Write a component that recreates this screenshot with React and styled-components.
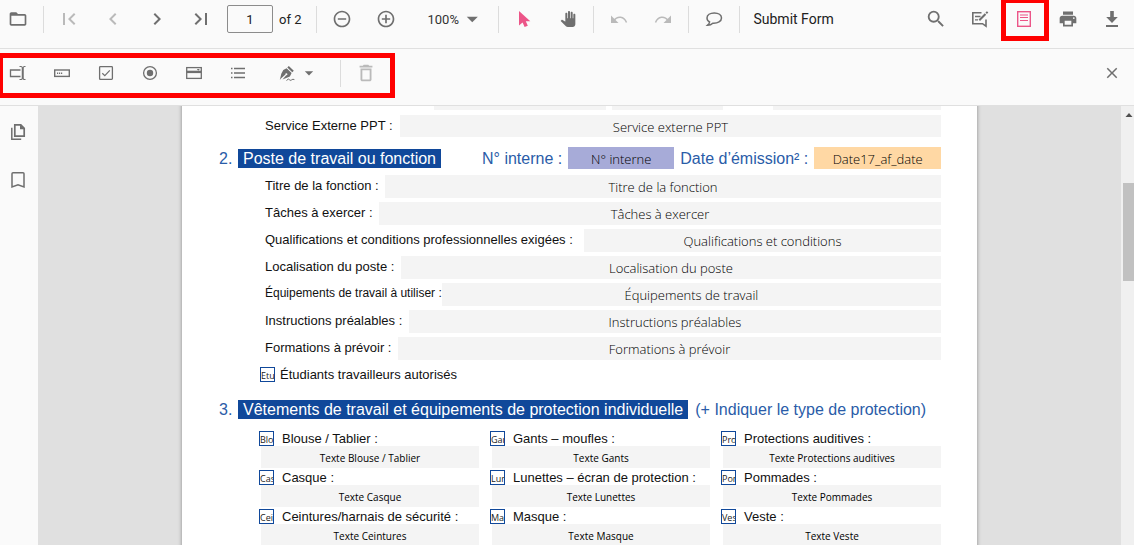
import React, { useState } from 'react';
import styled, { createGlobalStyle, css } from 'styled-components';
import {
  MdFolderOpen,
  MdFirstPage,
  MdChevronLeft,
  MdChevronRight,
  MdLastPage,
  MdRemoveCircleOutline,
  MdAddCircleOutline,
  MdArrowDropDown,
  MdPanTool,
  MdSearch,
  MdPrint,
  MdClose,
  MdDeleteOutline,
} from 'react-icons/md';

const GlobalStyle = createGlobalStyle`
  * {
    box-sizing: border-box;
  }

  body {
    margin: 0;
    font-family: Roboto, 'Liberation Sans', sans-serif;
    color: #212121;
  }

  button,
  input {
    font-family: inherit;
    margin: 0;
  }
`;

const Viewer = styled.div`
  display: flex;
  flex-direction: column;
  height: 100vh;
  overflow: hidden;
`;

const Toolbar = styled.div`
  display: flex;
  align-items: center;
  gap: 8px;
  flex: none;
  height: ${p => (p.$tall ? 57 : 49)}px;
  padding: ${p => (p.$tall ? '0 4px 8px 0' : '0 4px 10px 0')};
  background: #fafafa;
  border-bottom: 1px solid #e0e0e0;
`;

const RightGroup = styled.div`
  display: flex;
  gap: 8px;
  margin-left: auto;
`;

const Separator = styled.span`
  width: 1px;
  height: 27px;
  margin: 0 -1px;
  background: #dcdcdc;
`;

const IconButton = styled.button`
  position: relative;
  display: flex;
  align-items: center;
  justify-content: center;
  gap: 3px;
  flex: none;
  width: ${p => (p.$wide ? 69 : 36)}px;
  height: 36px;
  padding: 0;
  border: 0;
  background: none;
  color: ${p => (p.$active ? '#ec5588' : '#6f6f6f')};

  &:disabled {
    color: #bababa;
  }
`;

const TextButton = styled.button`
  padding: 0 6px;
  border: 0;
  background: none;
  color: #212121;
  font-size: 14px;
  white-space: nowrap;
`;

const ZoomButton = styled.button`
  display: flex;
  align-items: center;
  justify-content: space-between;
  width: 79px;
  padding: 0 6px 0 15px;
  border: 0;
  background: none;
  color: #333;
  font-size: 13px;

  svg {
    color: #6f6f6f;
  }
`;

const PageBox = styled.label`
  display: flex;
  align-items: center;
  gap: 6px;
  padding-right: 8px;
  font-size: 13px;
  white-space: nowrap;
`;

const PageInput = styled.input`
  width: 46px;
  height: 28px;
  padding: 0;
  border: 1px solid #8c8c8c;
  border-radius: 2px;
  background: #fafafa;
  color: #212121;
  font-size: 13px;
  text-align: center;
`;

// red frames drawn over the tools to point at them
const frame = css`
  content: '';
  position: absolute;
  border: 5px solid #f00;
  pointer-events: none;
`;

const FramedButton = styled(IconButton)`
  &::after {
    ${frame}
    inset: -3px -7px -4px -5px;
  }
`;

const FormTools = styled.div`
  position: relative;
  display: flex;
  align-items: center;
  gap: 8px;

  &::after {
    ${frame}
    inset: -2px -11px -7px -2px;
  }
`;

const Body = styled.div`
  display: flex;
  flex: 1;
  min-height: 0;
`;

const SideBar = styled.nav`
  display: flex;
  flex-direction: column;
  gap: 12px;
  flex: none;
  width: 38px;
  padding-top: 8px;
  background: #fafafa;
`;

const Canvas = styled.main`
  flex: 1;
  min-width: 0;
  overflow: hidden;
  background: #e0e0e0;
`;

const Sheet = styled.form`
  width: 795px;
  max-width: 100%;
  min-height: 100%;
  margin: 0 auto;
  padding: 0 36px 40px 83px;
  background: #fff;
  box-shadow: 0 0 4px rgba(0, 0, 0, 0.4);
  font-family: 'Liberation Sans', Arial, sans-serif;
  font-size: 13px;
  color: #111;
`;

const ScrollBar = styled.div`
  display: flex;
  flex-direction: column;
  align-items: flex-end;
  flex: none;
  width: 13px;
  background: #f0f0f0;
`;

const ScrollArrow = styled.svg`
  display: block;
  width: 10px;
  height: 17px;
  margin-bottom: 60px;
`;

const ScrollThumb = styled.div`
  width: 11px;
  height: 98px;
  background: #c1c1c1;
`;

const FieldGroup = styled.div`
  display: flex;
  justify-content: flex-end;
  gap: ${p => p.$gap}px;
`;

// only the bottom edge of this row is scrolled into view
const CutRow = styled(FieldGroup)`
  margin: -18px 0 5px;
`;

const Field = styled.input`
  flex: ${p => (p.$width ? 'none' : 1)};
  width: ${p => (p.$width ? `${p.$width}px` : '100%')};
  min-width: 0;
  height: ${p => p.$height || 23}px;
  padding: 1px 0 0;
  border: 0;
  background: ${p => p.$color || '#f4f4f4'};
  color: #000;
  font-family: 'Open Sans', 'Noto Sans', sans-serif;
  font-size: ${p => (p.$small ? 10 : 13)}px;
  font-weight: ${p => (p.$small ? 400 : 300)};
  text-align: center;
`;

const Line = styled.div`
  display: flex;
  margin-bottom: 4px;
`;

const LineLabel = styled.label`
  min-width: ${p => p.$width}px;
  font-size: ${p => (p.$small ? 12 : 13)}px;
  line-height: 21px;
  white-space: nowrap;
`;

const Heading = styled.div`
  display: flex;
  align-items: center;
  margin: ${p => p.$margin};
  color: #2a5ca8;
  font-size: 16px;
  line-height: 19px;
  white-space: nowrap;
`;

const HeadingNumber = styled.span`
  width: 19px;
`;

const HeadingTitle = styled.h2`
  margin: 0 ${p => p.$after}px 0 0;
  padding: 0 5px;
  background: #10489a;
  color: #fff;
  font-size: 16px;
  font-weight: 400;
  line-height: 19px;
`;

const HeadingLabel = styled.label`
  padding: 0 6px;
`;

const Tick = styled.span`
  display: grid;
  flex: none;
  width: 15px;
  height: 15px;
  border: 1px solid #10489a;
  background: #fff;
  overflow: hidden;

  > * {
    grid-area: 1 / 1;
  }
`;

const TickInput = styled.input`
  appearance: none;
  width: 13px;
  height: 13px;
`;

const TickName = styled.span`
  width: 13px;
  overflow: hidden;
  color: #222;
  font-family: 'Open Sans', 'Noto Sans', sans-serif;
  font-size: 9px;
  line-height: 15px;
  white-space: nowrap;
  pointer-events: none;
`;

const TickLabel = styled.label`
  display: flex;
  align-items: center;
  gap: 8px;
  height: 16px;
  white-space: nowrap;
`;

const TickLine = styled.div`
  margin: 6px 0 0 -5px;

  ${TickLabel} {
    gap: 5px;
  }
`;

const GearGrid = styled.div`
  display: grid;
  grid-template-columns: repeat(3, minmax(0, 1fr));
  gap: 1px 11px;
  margin-left: -6px;
`;

const GearField = styled.div`
  display: flex;
  padding-left: 2px;
`;

const Glyph = ({ children, size = 18 }) => (
  <svg
    width={size}
    height={size}
    viewBox="0 0 18 18"
    fill="none"
    stroke="currentColor"
    strokeWidth="1.5"
    aria-hidden="true"
  >
    {children}
  </svg>
);

const CursorIcon = () => (
  <Glyph>
    <path d="M4 1v14.500l3.600-3 2 4.600 3.200-1.300-2-4.500h4.500z" fill="currentColor" stroke="none" />
  </Glyph>
);

const UndoIcon = ({ flip }) => (
  <Glyph>
    <g transform={flip ? 'matrix(-1 0 0 1 18 0)' : undefined}>
      <path d="M3.500 11C7.500 5.500 14 6 16.500 12.500" />
      <path d="M1 5.500v7.500h7.500z" fill="currentColor" stroke="none" />
    </g>
  </Glyph>
);

const CommentIcon = () => (
  <Glyph>
    <path d="M9.300 3C5 3 2 5 2 8c0 1.800 1 3.200 2.600 4-.2 1.200-.8 2.200-2 3.200 2.200 0 4-.8 5.200-2 5 .3 8.700-1.900 8.700-5.200 0-3-3-5-7.200-5z" />
  </Glyph>
);

const AnnotateIcon = () => (
  <Glyph>
    <path d="M10.500 2.700H1.800v11h9.700l3.500 2.500V9.500" strokeWidth="1.600" />
    <path d="M4 6.500h5.500M4 9.800h3" strokeWidth="1.300" />
    <path d="M8.300 10.300l6.200-6.300" strokeWidth="2" />
    <path d="M15.200 3.300l1.400-1.400" strokeWidth="2" />
  </Glyph>
);

const FormIcon = () => (
  <Glyph>
    <rect x="2.700" y="1.700" width="12.600" height="14.600" strokeWidth="1.400" />
    <path d="M5 5h8M5 7.500h8M5 10.500h8" strokeWidth="1.100" />
  </Glyph>
);

const DownloadIcon = () => (
  <Glyph>
    <path d="M7.200 1h3.600v6h4L9 13 3.200 7h4zM3 15h12v2H3z" fill="currentColor" stroke="none" />
  </Glyph>
);

const TextboxIcon = () => (
  <Glyph>
    <path d="M11.500 6H1.500v6.500h10" strokeWidth="1.300" />
    <path
      d="M10.500 2.500h1.500q1.300 0 1.300 1.300v10.400q0 1.300-1.300 1.300h-1.500M16.500 2.500h-1q-1.300 0-1.300 1.300v10.400q0 1.300 1.300 1.300h1"
      strokeWidth="1.100"
    />
  </Glyph>
);

const PasswordIcon = () => (
  <Glyph>
    <rect x="1.700" y="6" width="14.600" height="6.400" strokeWidth="1.400" />
    <path d="M4 9.200h1.200M6 9.200h1.200M8 9.200h1.200" strokeWidth="1.600" />
  </Glyph>
);

const CheckboxIcon = () => (
  <Glyph>
    <rect x="2.600" y="2.600" width="12.800" height="12.800" rx=".8" strokeWidth="1.300" />
    <path d="M5.300 9.300l2.500 2.400 5-5.400" strokeWidth="1.200" />
  </Glyph>
);

const RadioIcon = () => (
  <Glyph>
    <circle cx="9" cy="9" r="6.400" strokeWidth="1.300" />
    <circle cx="9" cy="9" r="3.200" fill="currentColor" stroke="none" />
  </Glyph>
);

const DropdownIcon = () => (
  <Glyph>
    <rect x="1.700" y="3.600" width="14.600" height="10.800" strokeWidth="1.300" />
    <path d="M1.700 7.900h14.600" strokeWidth="2.400" />
    <path d="M11.800 5h3l-1.500 1.800z" fill="currentColor" stroke="none" />
  </Glyph>
);

const ListIcon = () => (
  <Glyph>
    <path d="M5 4.500h11M5 9h11M5 13.500h11" strokeWidth="1.400" />
    <path d="M2 4.500h1.500M2 9h1.500M2 13.500h1.500" strokeWidth="1.400" />
  </Glyph>
);

const SignatureIcon = () => (
  <Glyph>
    <path
      d="M10.800 2l5 4.800-1.500 1.500-5-4.700zM8.600 4.200l5 4.700-1.700 3.600-7.400 2.900 3.700-4.200a1 1 0 1 0-.8-.8L3 14.600 1.800 16l1.500-6.300 2-3.700z"
      fill="currentColor"
      stroke="none"
    />
    <path d="M8.500 16.500q2.200-2.500 2.900-.8.500 1.200 2 .3 1.500-1.300 3-.4" strokeWidth="1" />
  </Glyph>
);

const PagesIcon = () => (
  <Glyph>
    <path d="M5.800 1.800h6l3.400 3.500v7.900H5.800z" strokeWidth="1.700" />
    <path d="M11 1.500v4.700h4.700z" fill="currentColor" stroke="none" />
    <path d="M2.800 4.800v11.400h9.400" strokeWidth="1.500" />
  </Glyph>
);

const BookmarkIcon = () => (
  <Glyph>
    <path d="M4 1.800h10q1 0 1 1v13.200L9 13.700 3 16V2.800q0-1 1-1z" />
  </Glyph>
);

const lines = [
  { id: 'titre', label: 'Titre de la fonction :', value: 'Titre de la fonction', width: 120 },
  { id: 'taches', label: 'Tâches à exercer :', value: 'Tâches à exercer', width: 114 },
  {
    id: 'qualif',
    label: 'Qualifications et conditions professionnelles exigées :',
    value: 'Qualifications et conditions',
    width: 319,
  },
  { id: 'local', label: 'Localisation du poste :', value: 'Localisation du poste', width: 136 },
  { id: 'equip', label: 'Équipements de travail à utiliser :', value: 'Équipements de travail', width: 172, small: true },
  { id: 'instr', label: 'Instructions préalables :', value: 'Instructions préalables', width: 144 },
  { id: 'form', label: 'Formations à prévoir :', value: 'Formations à prévoir', width: 133 },
];

const gear = [
  { name: 'Blouse', label: 'Blouse / Tablier :', value: 'Texte Blouse / Tablier' },
  { name: 'Gants', label: 'Gants – moufles :', value: 'Texte Gants' },
  { name: 'Protections', label: 'Protections auditives :', value: 'Texte Protections auditives' },
  { name: 'Casque', label: 'Casque :', value: 'Texte Casque' },
  { name: 'Lunettes', label: 'Lunettes – écran de protection :', value: 'Texte Lunettes' },
  { name: 'Pommades', label: 'Pommades :', value: 'Texte Pommades' },
  { name: 'Ceintures', label: 'Ceintures/harnais de sécurité :', value: 'Texte Ceintures' },
  { name: 'Masque', label: 'Masque :', value: 'Texte Masque' },
  { name: 'Veste', label: 'Veste :', value: 'Texte Veste' },
];

const CheckField = ({ name, label }) => (
  <TickLabel>
    <Tick>
      <TickInput type="checkbox" name={name} />
      <TickName aria-hidden="true">{name.slice(0, 3)}</TickName>
    </Tick>
    {label}
  </TickLabel>
);

const MainToolbar = () => {
  const [page, setPage] = useState('1');

  return (
    <Toolbar>
      <IconButton aria-label="Open"><MdFolderOpen size={20} /></IconButton>
      <Separator />
      <IconButton aria-label="First page" disabled><MdFirstPage size={24} /></IconButton>
      <IconButton aria-label="Previous page" disabled><MdChevronLeft size={24} /></IconButton>
      <IconButton aria-label="Next page"><MdChevronRight size={24} /></IconButton>
      <IconButton aria-label="Last page"><MdLastPage size={24} /></IconButton>
      <PageBox>
        <PageInput aria-label="Page" value={page} onChange={e => setPage(e.target.value)} />
        of 2
      </PageBox>
      <Separator />
      <IconButton aria-label="Zoom out"><MdRemoveCircleOutline size={20} /></IconButton>
      <IconButton aria-label="Zoom in"><MdAddCircleOutline size={20} /></IconButton>
      <ZoomButton>
        100%
        <MdArrowDropDown size={28} />
      </ZoomButton>
      <Separator />
      <IconButton aria-label="Select" $active><CursorIcon /></IconButton>
      <IconButton aria-label="Pan"><MdPanTool size={16} /></IconButton>
      <Separator />
      <IconButton aria-label="Undo" disabled><UndoIcon /></IconButton>
      <IconButton aria-label="Redo" disabled><UndoIcon flip /></IconButton>
      <Separator />
      <IconButton aria-label="Comment"><CommentIcon /></IconButton>
      <Separator />
      <TextButton>Submit Form</TextButton>
      <RightGroup>
        <IconButton aria-label="Search"><MdSearch size={22} /></IconButton>
        <IconButton aria-label="Annotate"><AnnotateIcon /></IconButton>
        <FramedButton aria-label="Form designer" $active><FormIcon /></FramedButton>
        <IconButton aria-label="Print"><MdPrint size={20} /></IconButton>
        <IconButton aria-label="Download"><DownloadIcon /></IconButton>
      </RightGroup>
    </Toolbar>
  );
};

const DesignerToolbar = () => (
  <Toolbar $tall>
    <FormTools>
      <IconButton aria-label="Textbox"><TextboxIcon /></IconButton>
      <IconButton aria-label="Password"><PasswordIcon /></IconButton>
      <IconButton aria-label="Checkbox"><CheckboxIcon /></IconButton>
      <IconButton aria-label="Radio button"><RadioIcon /></IconButton>
      <IconButton aria-label="Dropdown"><DropdownIcon /></IconButton>
      <IconButton aria-label="List box"><ListIcon /></IconButton>
      <IconButton aria-label="Signature" $wide>
        <SignatureIcon />
        <MdArrowDropDown size={20} />
      </IconButton>
      <Separator />
      <IconButton aria-label="Delete" disabled><MdDeleteOutline size={22} /></IconButton>
    </FormTools>
    <RightGroup>
      <IconButton aria-label="Close"><MdClose size={18} /></IconButton>
    </RightGroup>
  </Toolbar>
);

const App = () => (
  <>
    <GlobalStyle />
    <Viewer>
      <MainToolbar />
      <DesignerToolbar />
      <Body>
        <SideBar>
          <IconButton aria-label="Thumbnails"><PagesIcon /></IconButton>
          <IconButton aria-label="Bookmarks"><BookmarkIcon /></IconButton>
        </SideBar>
        <Canvas>
          <Sheet>
            <CutRow $gap={50}>
              <FieldGroup $gap={6}>
                <Field aria-label="Rue" $width={172} $height={22} />
                <Field aria-label="Code postal" $width={111} $height={22} />
              </FieldGroup>
              <Field aria-label="Commune" $width={168} $height={22} />
            </CutRow>
            <Line>
              <LineLabel htmlFor="service" $width={135}>Service Externe PPT :</LineLabel>
              <Field id="service" defaultValue="Service externe PPT" $height={22} />
            </Line>
            <Heading $margin="10px 0 6px -46px">
              <HeadingNumber>2.</HeadingNumber>
              <HeadingTitle $after={35}>Poste de travail ou fonction</HeadingTitle>
              <HeadingLabel htmlFor="interne">N° interne :</HeadingLabel>
              <Field id="interne" defaultValue="N° interne" $width={106} $height={22} $color="#a7abd8" />
              <HeadingLabel htmlFor="date">Date d’émission² :</HeadingLabel>
              <Field id="date" defaultValue="Date17_af_date" $height={22} $color="#ffd8a4" />
            </Heading>
            {lines.map(l => (
              <Line key={l.id}>
                <LineLabel htmlFor={l.id} $width={l.width} $small={l.small}>{l.label}</LineLabel>
                <Field id={l.id} defaultValue={l.value} />
              </Line>
            ))}
            <TickLine>
              <CheckField name="Etudiants" label="Étudiants travailleurs autorisés" />
            </TickLine>
            <Heading $margin="18px 0 11px -46px">
              <HeadingNumber>3.</HeadingNumber>
              <HeadingTitle $after={7}>
                Vêtements de travail et équipements de protection individuelle
              </HeadingTitle>
              (+ Indiquer le type de protection)
            </Heading>
            <GearGrid>
              {gear.map(g => (
                <div key={g.name}>
                  <CheckField name={g.name} label={g.label} />
                  <GearField>
                    <Field aria-label={g.value} defaultValue={g.value} $height={22} $small />
                  </GearField>
                </div>
              ))}
            </GearGrid>
          </Sheet>
        </Canvas>
        <ScrollBar>
          <ScrollArrow viewBox="0 0 10 17">
            <path d="M1.500 11L5 7l3.500 4z" fill="#505050" />
          </ScrollArrow>
          <ScrollThumb />
        </ScrollBar>
      </Body>
    </Viewer>
  </>
);

export default App;
